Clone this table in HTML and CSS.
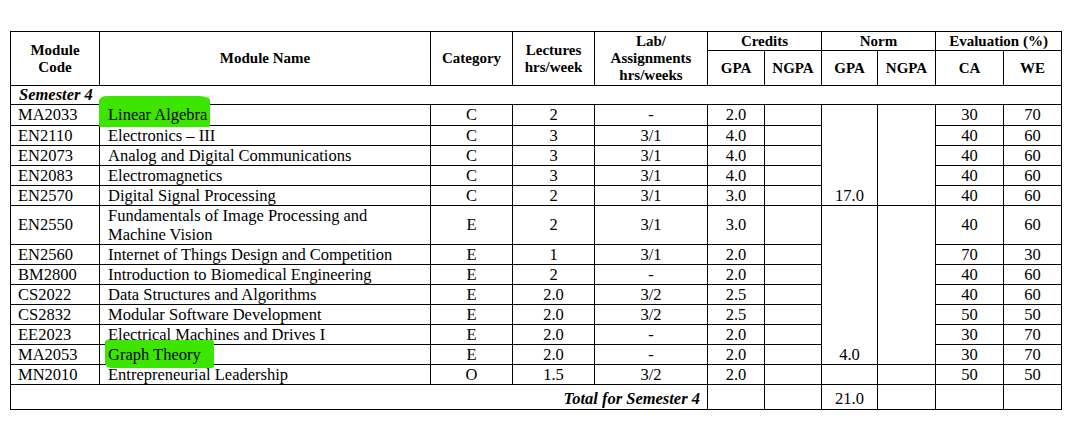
FILE: index.html
```html
<!DOCTYPE html>
<html lang="en">
<head>
<meta charset="utf-8">
<title>Semester 4 Modules</title>
<link rel="stylesheet" href="styles.css">
</head>
<body>
<div class="page">
<table class="mods">
  <colgroup>
    <col class="c-code"><col class="c-name"><col class="c-cat"><col class="c-lec"><col class="c-lab">
    <col class="c-g"><col class="c-ng"><col class="c-ngp"><col class="c-nng"><col class="c-ca"><col class="c-we">
  </colgroup>
  <thead>
    <tr class="h1">
      <th rowspan="2">Module<br>Code</th>
      <th rowspan="2">Module Name</th>
      <th rowspan="2">Category</th>
      <th rowspan="2">Lectures<br>hrs/week</th>
      <th rowspan="2">Lab/<br>Assignments<br>hrs/weeks</th>
      <th colspan="2">Credits</th>
      <th colspan="2">Norm</th>
      <th colspan="2">Evaluation (%)</th>
    </tr>
    <tr class="h2">
      <th>GPA</th><th>NGPA</th><th>GPA</th><th>NGPA</th><th>CA</th><th>WE</th>
    </tr>
  </thead>
  <tbody>
    <tr class="sem"><td colspan="11" class="semt">Semester 4</td></tr>
    <tr class="r r1">
      <td class="code">MA2033</td><td class="name"><span class="hl hl-a">Linear Algebra</span></td><td>C</td><td>2</td><td>-</td><td>2.0</td><td></td>
      <td rowspan="5" class="norm">17.0</td><td rowspan="5" class="norm"></td><td>30</td><td>70</td>
    </tr>
    <tr class="r"><td class="code">EN2110</td><td class="name">Electronics – III</td><td>C</td><td>3</td><td>3/1</td><td>4.0</td><td></td><td>40</td><td>60</td></tr>
    <tr class="r"><td class="code">EN2073</td><td class="name">Analog and Digital Communications</td><td>C</td><td>3</td><td>3/1</td><td>4.0</td><td></td><td>40</td><td>60</td></tr>
    <tr class="r"><td class="code">EN2083</td><td class="name">Electromagnetics</td><td>C</td><td>3</td><td>3/1</td><td>4.0</td><td></td><td>40</td><td>60</td></tr>
    <tr class="r"><td class="code">EN2570</td><td class="name">Digital Signal Processing</td><td>C</td><td>2</td><td>3/1</td><td>3.0</td><td></td><td>40</td><td>60</td></tr>
    <tr class="r r2">
      <td class="code">EN2550</td><td class="name wrap">Fundamentals of Image Processing and Machine Vision</td><td>E</td><td>2</td><td>3/1</td><td>3.0</td><td></td>
      <td rowspan="7" class="norm">4.0</td><td rowspan="7" class="norm"></td><td>40</td><td>60</td>
    </tr>
    <tr class="r"><td class="code">EN2560</td><td class="name">Internet of Things Design and Competition</td><td>E</td><td>1</td><td>3/1</td><td>2.0</td><td></td><td>70</td><td>30</td></tr>
    <tr class="r"><td class="code">BM2800</td><td class="name">Introduction to Biomedical Engineering</td><td>E</td><td>2</td><td>-</td><td>2.0</td><td></td><td>40</td><td>60</td></tr>
    <tr class="r"><td class="code">CS2022</td><td class="name">Data Structures and Algorithms</td><td>E</td><td>2.0</td><td>3/2</td><td>2.5</td><td></td><td>40</td><td>60</td></tr>
    <tr class="r"><td class="code">CS2832</td><td class="name">Modular Software Development</td><td>E</td><td>2.0</td><td>3/2</td><td>2.5</td><td></td><td>50</td><td>50</td></tr>
    <tr class="r"><td class="code">EE2023</td><td class="name">Electrical Machines and Drives I</td><td>E</td><td>2.0</td><td>-</td><td>2.0</td><td></td><td>30</td><td>70</td></tr>
    <tr class="r"><td class="code">MA2053</td><td class="name"><span class="hl hl-b">Graph Theory</span></td><td>E</td><td>2.0</td><td>-</td><td>2.0</td><td></td><td>30</td><td>70</td></tr>
    <tr class="r"><td class="code">MN2010</td><td class="name">Entrepreneurial Leadership</td><td>O</td><td>1.5</td><td>3/2</td><td>2.0</td><td></td><td></td><td></td><td>50</td><td>50</td></tr>
    <tr class="tot">
      <td colspan="5" class="tott">Total for Semester 4</td><td></td><td></td><td>21.0</td><td></td><td></td><td></td>
    </tr>
  </tbody>
</table>
</div>
</body>
</html>
```

FILE: styles.css
```css
html, body {
  margin: 0;
  padding: 0;
  background: #ffffff;
}
.page {
  padding: 31px 0 0 10px;
}
.mods {
  border-collapse: collapse;
  table-layout: fixed;
  width: 1052px;
  font-family: "Liberation Serif", "Times New Roman", serif;
  color: #000;
  font-size: 16.5px;
}
.c-code { width: 89px; }
.c-name { width: 331px; }
.c-cat { width: 82px; }
.c-lec { width: 82px; }
.c-lab { width: 113px; }
.c-g { width: 57px; }
.c-ng { width: 57px; }
.c-ngp { width: 56px; }
.c-nng { width: 58px; }
.c-ca { width: 68px; }
.c-we { width: 58px; }

.mods th, .mods td {
  border: 1px solid #000;
  padding: 0;
  text-align: center;
  vertical-align: middle;
  overflow: visible;
}
.mods th {
  font-weight: bold;
  font-size: 15px;
  line-height: 17px;
}
.h1 { height: 19px; }
.h2 { height: 35px; }
.sem { height: 19px; }
.r { height: 20px; }
.r1 { height: 21px; }
.r2 { height: 39px; }
.tot { height: 25px; }

.mods td {
  line-height: 18px;
  white-space: nowrap;
}
.semt {
  text-align: left !important;
  padding-left: 8px !important;
  font-weight: bold;
  font-style: italic;
}
.code {
  text-align: left !important;
  padding-left: 7px !important;
}
.name {
  text-align: left !important;
  padding-left: 8px !important;
  padding-right: 12px !important;
}
.name.wrap {
  white-space: normal;
  line-height: 19px;
}
.norm {
  vertical-align: bottom !important;
}
.tot td {
  vertical-align: bottom;
  padding-bottom: 1px;
}
.tott {
  text-align: right !important;
  padding-right: 7px !important;
  font-weight: bold;
  font-style: italic;
}
.hl {
  position: relative;
  background: #3de600;
}
.hl-a {
  padding: 9px 3px 3px 9px;
  margin-left: -9px;
  border-radius: 8px 12px 2px 2px / 5px 4px 2px 2px;
}
.hl-b {
  padding: 5px 13px 4px 3px;
  margin-left: -3px;
  border-radius: 2px 3px 2px 6px;
}
```
